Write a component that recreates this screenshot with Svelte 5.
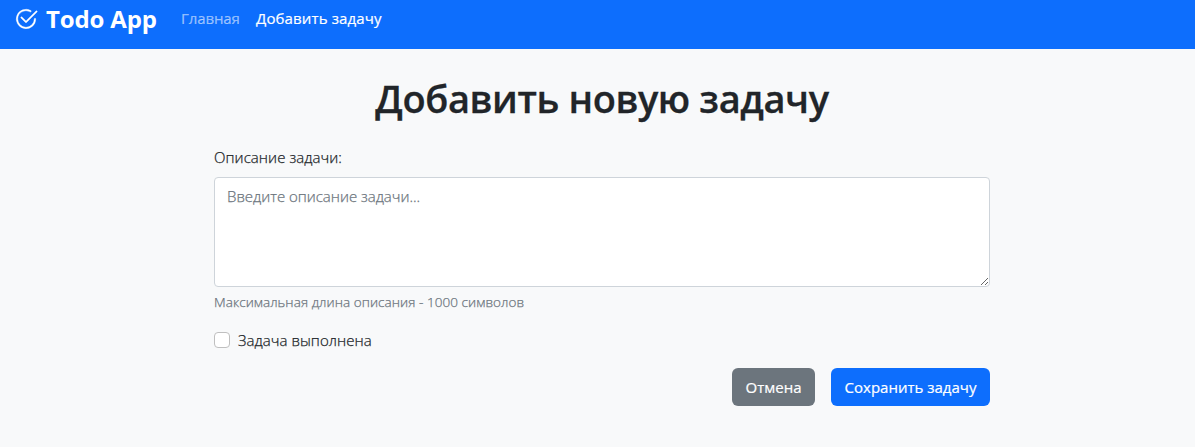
<script>
  let description = $state('');
  let done = $state(false);
</script>

<nav class="navbar">
  <a class="brand" href="#home">
    <svg viewBox="0 0 16 16" width="24" height="24" fill="currentColor" aria-hidden="true">
      <path d="M2.5 8a5.5 5.5 0 0 1 8.25-4.764.5.5 0 0 0 .5-.866A6.5 6.5 0 1 0 14.5 8a.5.5 0 0 0-1 0 5.5 5.5 0 1 1-11 0z" />
      <path d="M15.354 3.354a.5.5 0 0 0-.708-.708L8 9.293 5.354 6.646a.5.5 0 1 0-.708.708l3 3a.5.5 0 0 0 .708 0z" />
    </svg>
    <span>Todo App</span>
  </a>
  <a class="link home" href="#home">Главная</a>
  <a class="link active" href="#add">Добавить задачу</a>
</nav>

<main>
  <h1>Добавить новую задачу</h1>
  <form onsubmit={(e) => e.preventDefault()}>
    <label class="label" for="description"><span>Описание задачи:</span></label>
    <textarea id="description" maxlength="1000" placeholder="Введите описание задачи..." bind:value={description}></textarea>
    <div class="help"><span>Максимальная длина описания - 1000 символов</span></div>
    <label class="check">
      <input type="checkbox" bind:checked={done} />
      <span>Задача выполнена</span>
    </label>
    <div class="actions">
      <button type="button" class="btn cancel">Отмена</button>
      <button type="submit" class="btn save">Сохранить задачу</button>
    </div>
  </form>
</main>

<style>
  :global(body) {
    background: #f8f9fa;
    overflow: hidden;
  }
  :global(#app) {
    font-family: "Open Sans", "Noto Sans", sans-serif;
    font-size: 15px;
    font-weight: 300;
    line-height: 24px;
    color: #212529;
  }
  .navbar {
    display: flex;
    align-items: center;
    box-sizing: border-box;
    height: 49px;
    padding: 0 14px 11px;
    background: #0d6efd;
    white-space: nowrap;
  }
  .navbar a {
    text-decoration: none;
  }
  .brand {
    display: flex;
    align-items: center;
    gap: 8px;
    width: 167px;
    color: #fff;
    font-size: 24px;
    font-weight: 700;
    letter-spacing: -0.15px;
  }
  .brand svg {
    stroke: currentColor;
    stroke-width: 0.25;
  }
  .link {
    padding-bottom: 2px;
    font-weight: 500;
    -webkit-text-stroke: 0.2px;
  }
  .home {
    width: 75px;
    color: rgba(255, 255, 255, 0.55);
    letter-spacing: -0.1px;
  }
  .active {
    color: #fff;
    letter-spacing: 0.13px;
  }
  main {
    box-sizing: border-box;
    width: 776px;
    margin-left: 214px;
    padding-top: 25px;
    white-space: nowrap;
  }
  h1 {
    margin: 0 0 23px;
    text-align: center;
    font-size: 38px;
    line-height: 48px;
    font-weight: 600;
    letter-spacing: -0.4px;
    -webkit-text-stroke: 0.3px;
  }
  .label {
    display: block;
    margin-bottom: 8px;
  }
  .label,
  .check,
  .help,
  textarea {
    letter-spacing: 0.06px;
    -webkit-text-stroke: 0.25px;
  }
  textarea {
    display: block;
    box-sizing: border-box;
    width: 776px;
    height: 110px;
    padding: 6px 12px;
    border: 1px solid #ced4da;
    border-radius: 4px;
    background: #fff;
    font: inherit;
    letter-spacing: -0.02px;
    color: inherit;
    outline: none;
    resize: vertical;
  }
  textarea::placeholder {
    color: #6c757d;
    opacity: 1;
  }
  .help {
    margin-top: 5px;
    font-size: 13.5px;
    line-height: 21px;
    color: #6c757d;
  }
  .check {
    display: flex;
    align-items: center;
    gap: 8px;
    margin-top: 15px;
  }
  input {
    appearance: none;
    box-sizing: border-box;
    width: 16px;
    height: 16px;
    margin: 0;
    border: 1px solid #bfbfbf;
    border-radius: 4px;
    background: #fff;
  }
  input:checked {
    background: #0d6efd;
    border-color: #0d6efd;
  }
  .actions {
    display: flex;
    justify-content: flex-end;
    gap: 16px;
    margin-top: 16px;
  }
  .btn {
    box-sizing: border-box;
    height: 38px;
    padding: 0;
    border: 0;
    border-radius: 6px;
    color: #fff;
    font: inherit;
    font-weight: 500;
    -webkit-text-stroke: 0.2px;
  }
  .cancel {
    width: 83px;
    background: #6c757d;
  }
  .save {
    width: 159px;
    background: #0d6efd;
  }
</style>
